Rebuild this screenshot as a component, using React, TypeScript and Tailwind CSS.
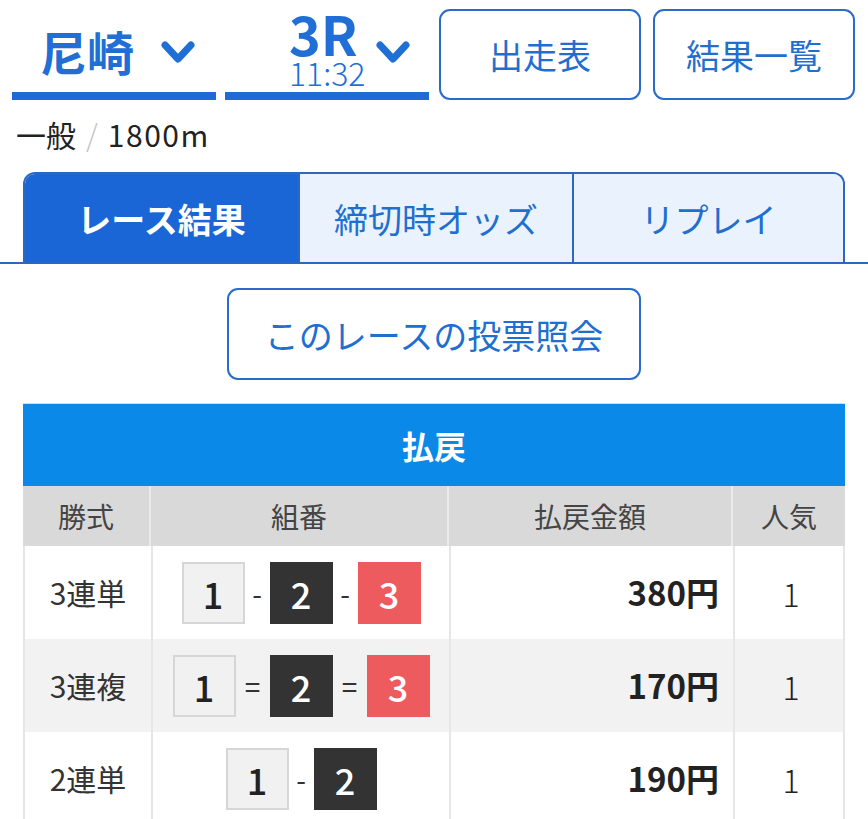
import React from "react";

const FONT = { fontFamily: '"Noto Sans CJK JP", "Noto Sans", sans-serif' };

function Chevron() {
  return (
    <svg width="36" height="26" viewBox="0 0 36 26" className="shrink-0">
      <path d="M5 5 L18 19 L31 5" fill="none" stroke="#1f6fd6" strokeWidth="7" strokeLinecap="round" strokeLinejoin="round" />
    </svg>
  );
}

function NumBox({ n }: { n: number }) {
  const cls =
    n === 1
      ? "bg-[#f1f1f1] border-2 border-[#d6d6d6] text-[#222]"
      : n === 2
      ? "bg-[#333333] text-white"
      : "bg-[#ee5b5e] text-white";
  return (
    <div className={`w-[63px] h-[62px] flex items-center justify-center text-[36px] font-medium leading-none ${cls}`}>
      {n}
    </div>
  );
}

function Sep({ s }: { s: string }) {
  return (
    <div className={`${s === "=" ? "w-[34px]" : "w-[25px]"} text-center text-[28px] text-[#333] leading-none`}>{s}</div>
  );
}

function Combo({ nums, sep }: { nums: number[]; sep: string }) {
  return (
    <div className="flex items-center justify-center">
      {nums.map((n, i) => (
        <React.Fragment key={i}>
          {i > 0 && <Sep s={sep} />}
          <NumBox n={n} />
        </React.Fragment>
      ))}
    </div>
  );
}

const rows = [
  { type: "3連単", nums: [1, 2, 3], sep: "-", amt: "380円", pop: "1", bg: "bg-white" },
  { type: "3連複", nums: [1, 2, 3], sep: "=", amt: "170円", pop: "1", bg: "bg-[#f2f2f2]" },
  { type: "2連単", nums: [1, 2], sep: "-", amt: "190円", pop: "1", bg: "bg-white" },
];

export default function App() {
  return (
    <div style={FONT} className="w-[868px] h-[819px] overflow-hidden bg-white text-[#222]">
      {/* Top row */}
      <div className="flex pt-[9px] pl-[12px]">
        <div className="w-[204px] h-[91px] border-b-[8px] border-[#1f6ad4] flex items-center pl-[28px]">
          <span className="text-[47px] font-bold text-[#1f6fd6] leading-none">尼崎</span>
          <span className="ml-[26px] mt-[4px]"><Chevron /></span>
        </div>
        <div className="w-[204px] h-[91px] ml-[9px] border-b-[8px] border-[#1f6ad4] flex items-start pl-[56px]">
          <div className="flex flex-col items-center">
            <span className="text-[54px] font-bold text-[#1f6fd6] leading-[48px]">3R</span>
            <span className="text-[32px] font-light text-[#1f6fd6] leading-[30px] pl-[8px]">11:32</span>
          </div>
          <span className="ml-[10px] mt-[31px]"><Chevron /></span>
        </div>
        <div className="w-[202px] h-[91px] ml-[10px] border-2 border-[#2a6cc8] rounded-[11px] flex items-center justify-center text-[34px] text-[#1f6fd0]">
          出走表
        </div>
        <div className="w-[202px] h-[91px] ml-[12px] border-2 border-[#2a6cc8] rounded-[11px] flex items-center justify-center text-[34px] text-[#1f6fd0]">
          結果一覧
        </div>
      </div>

      {/* info */}
      <div className="pl-[16px] mt-[14px] h-[40px] flex items-center text-[30px] text-[#222]">
        <span>一般</span>
        <span className="mx-[10px] text-[#c4c4c4] font-light">/</span>
        <span className="tracking-[1.5px]">1800m</span>
      </div>

      {/* tabs */}
      <div className="mt-[18px] border-b-2 border-[#2c68c0]">
        <div className="mx-[23px] flex h-[90px] rounded-t-[12px] overflow-hidden border-2 border-b-0 border-[#2c68c0]">
          <div className="w-[273px] bg-[#1a66d6] flex items-center justify-center text-[34px] font-bold text-white">レース結果</div>
          <div className="w-[274px] bg-[#eaf3fd] border-l-2 border-[#2c68c0] flex items-center justify-center text-[34px] text-[#1f6fd0]">締切時オッズ</div>
          <div className="flex-1 bg-[#eaf3fd] border-l-2 border-[#2c68c0] flex items-center justify-center text-[34px] text-[#1f6fd0]">リプレイ</div>
        </div>
      </div>

      {/* inquiry button */}
      <div className="flex justify-center mt-[24px]">
        <div className="w-[414px] h-[92px] border-2 border-[#2a6cc8] rounded-[11px] flex items-center justify-center text-[34px] text-[#1f6fd0]">
          このレースの投票照会
        </div>
      </div>

      {/* table */}
      <div className="mx-[23px] mt-[23px] border-t border-[#bfe0fa]">
        <div className="h-[82px] bg-[#0a89e8] flex items-center justify-center text-[32px] font-bold text-white">払戻</div>
        <div className="grid grid-cols-[128px_298px_284px_112px] h-[60px] bg-[#d9d9da] text-[28px] text-[#444]">
          <div className="flex items-center justify-center border-r-2 border-[#eaeaea]">勝式</div>
          <div className="flex items-center justify-center border-r-2 border-[#eaeaea]">組番</div>
          <div className="flex items-center justify-center border-r-2 border-[#eaeaea]">払戻金額</div>
          <div className="flex items-center justify-center">人気</div>
        </div>
        {rows.map((r, i) => (
          <div key={i} className={`grid grid-cols-[128px_298px_284px_112px] h-[93px] ${r.bg} border-l-2 border-r-2 border-[#e6e6e6]`}>
            <div className="flex items-center justify-center border-r-2 border-[#e6e6e6] text-[30px] text-[#333]">{r.type}</div>
            <div className="flex items-center justify-center border-r-2 border-[#e6e6e6]">
              <Combo nums={r.nums} sep={r.sep} />
            </div>
            <div className="flex items-center justify-end pr-[14px] border-r-2 border-[#e6e6e6] text-[33px] font-bold text-[#222]">{r.amt}</div>
            <div className="flex items-center justify-center text-[32px] font-light text-[#222]">{r.pop}</div>
          </div>
        ))}
      </div>
    </div>
  );
}
